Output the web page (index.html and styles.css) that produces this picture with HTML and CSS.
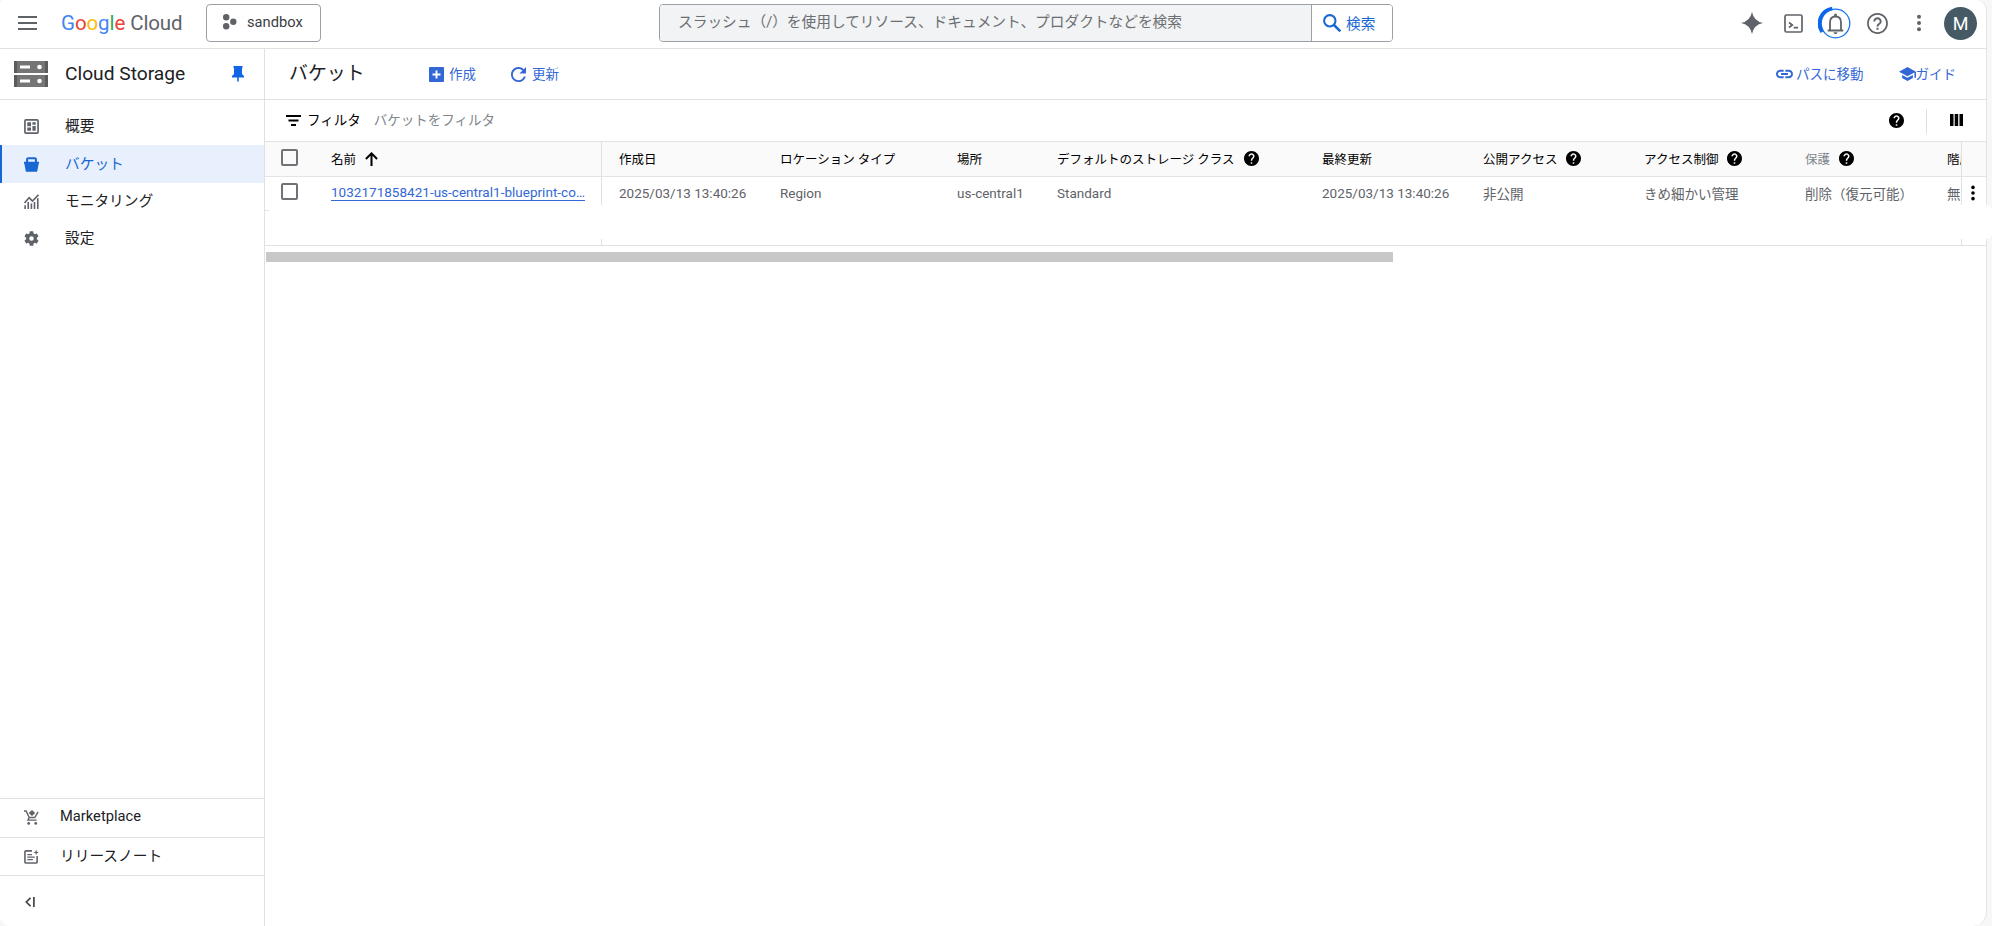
FILE: index.html
```
<!DOCTYPE html>
<html lang="ja">
<head>
  <meta charset="UTF-8">
  <meta name="viewport" content="width=device-width, initial-scale=1.0">
  <title>バケット – Cloud Storage – sandbox – Google Cloud</title>
  <link rel="stylesheet" href="styles.css">
</head>
<body>
  <svg class="defs" width="0" height="0">
    <symbol id="help" viewBox="0 0 24 24">
      <path d="M12 2C6.48 2 2 6.48 2 12s4.48 10 10 10 10-4.48 10-10S17.52 2 12 2zm1 17h-2v-2h2v2zm2.07-7.75l-.9.92C13.45 12.9 13 13.5 13 15h-2v-.5c0-1.1.45-2.1 1.17-2.83l1.24-1.26c.37-.36.59-.86.59-1.41 0-1.1-.9-2-2-2s-2 .9-2 2H8c0-2.21 1.79-4 4-4s4 1.79 4 4c0 .88-.36 1.68-.93 2.25z"/>
    </symbol>
    <symbol id="more" viewBox="0 0 24 24">
      <circle cx="12" cy="4.5" r="2.4"/><circle cx="12" cy="12" r="2.4"/><circle cx="12" cy="19.5" r="2.4"/>
    </symbol>
  </svg>

  <div class="app">
    <header class="topbar">
      <svg class="menu-icon" viewBox="0 0 19 14"><path d="M0 1h19M0 7h19M0 13h19" stroke="#5f6368" stroke-width="2"/></svg>
      <div class="logo"><span class="b">G</span><span class="r">o</span><span class="y">o</span><span class="b">g</span><span class="g">l</span><span class="r">e</span> Cloud</div>
      <button class="project">
        <svg viewBox="0 0 15 16"><circle cx="4.2" cy="3.3" r="3.2"/><circle cx="11.3" cy="7.8" r="3.2"/><circle cx="4.2" cy="12.3" r="3.2"/></svg>
        <span>sandbox</span>
      </button>
      <div class="search">
        <div class="search-input">スラッシュ（/）を使用してリソース、ドキュメント、プロダクトなどを検索</div>
        <button class="search-button">
          <svg viewBox="0 0 18 18"><circle cx="6.8" cy="6.8" r="5.7" fill="none" stroke="#1967d2" stroke-width="2.1"/><path d="M11 11l6.3 6.3" stroke="#1967d2" stroke-width="2.5"/></svg>
          <span>検索</span>
        </button>
      </div>
      <div class="tools">
        <svg class="spark" viewBox="0 0 24 24"><path d="M12 0Q14 10 24 12 14 14 12 24 10 14 0 12 10 10 12 0z"/></svg>
        <svg class="shell" viewBox="0 0 19 19"><rect x="1" y="1" width="17" height="17" rx="1.5" fill="none" stroke="#5f6368" stroke-width="1.7"/><path d="M5 8.500l3.300 2.500L5 13.500M9.700 13.700H14" fill="none" stroke="#5f6368" stroke-width="1.700"/></svg>
        <svg class="bell" viewBox="0 0 34 34">
          <circle cx="17.5" cy="17.5" r="14.3" fill="none" stroke="#1a73e8" stroke-width="1.3"/>
          <path d="M4.2 26A15 15 0 0 1 14.3 2.5" fill="none" stroke="#0b66ea" stroke-width="3.6"/>
          <path d="M9.7 24.5h15.600M12 24.300v-7.800c0-3.600 2.100-6 5.500-6s5.500 2.400 5.500 6v7.800" fill="none" stroke="#5f6368" stroke-width="1.800"/>
          <circle cx="17.5" cy="9" r="1.5" fill="#5f6368"/><path d="M15.5 26.3h4c0 2.400-4 2.400-4 0z" fill="#5f6368"/>
        </svg>
        <svg class="help-outline" viewBox="0 0 24 24"><path d="M11 18h2v-2h-2v2zm1-16C6.480 2 2 6.480 2 12s4.480 10 10 10 10-4.480 10-10S17.520 2 12 2zm0 18.300c-4.560 0-8.300-3.740-8.300-8.300S7.440 3.700 12 3.700s8.300 3.740 8.300 8.300-3.740 8.300-8.300 8.300zm0-14.300c-2.210 0-4 1.790-4 4h1.900c0-1.150.95-2.100 2.100-2.100s2.100.95 2.100 2.100c0 2-3 1.750-3 5h1.900c0-2.250 3-2.500 3-5 0-2.210-1.790-4-4-4z"/></svg>
        <svg class="more" viewBox="0 0 24 24"><use href="#more"/></svg>
        <div class="avatar">M</div>
      </div>
    </header>

    <div class="main">
      <aside class="sidebar">
        <div class="product">
          <svg class="product-icon" viewBox="0 0 34 26">
            <path d="M0 0h34v12H0zM0 14h34v12H0z" fill="#757575"/>
            <path d="M0 0h3v12H0zM31 0h3v12h-3zM0 14h3v12H0zM31 14h3v12h-3z" fill="#5c5c5c"/>
            <path d="M6 4.500h10v3H6zM6 18.500h10v3H6z" fill="#fff"/>
            <circle cx="25.5" cy="6" r="2.3" fill="#fff"/><circle cx="25.5" cy="20" r="2.3" fill="#fff"/>
          </svg>
          <span class="product-name">Cloud Storage</span>
          <svg class="pin" viewBox="0 0 12 16"><path d="M1.500 0h9v2H10v6l2 2v1.500H6.800V15L6 16l-.8-1V11.500H0V10l2-2V2h-.5z" fill="#1266e3"/></svg>
        </div>
        <nav class="nav">
          <a class="nav-item">
            <svg viewBox="0 0 16 16"><rect x="1" y="1" width="14" height="14" rx="1" fill="none" stroke="#5f6368" stroke-width="1.8"/><path d="M3.500 3.500h4v4.200h-4zM3.500 9h4v3.500h-4zM9 3.500h3.500v2.700H9zM9 7.500h3.500v5H9z" fill="#5f6368"/></svg>
            <span>概要</span>
          </a>
          <a class="nav-item active">
            <svg viewBox="0 0 16 16"><path d="M0 5h2.200V2.500Q2.200.2 4.500.2h7q2.300 0 2.300 2.300V5H16v2.300h-.4L14 15.800H2L.4 7.300H0zM4.400 5h7.200V2.500H4.400z" fill="#1967d2" fill-rule="evenodd"/></svg>
            <span>バケット</span>
          </a>
          <a class="nav-item">
            <svg viewBox="0 0 16 16"><path d="M.5 9.500L5.500 4l3.500 3.500L15.500.8" fill="none" stroke="#5f6368" stroke-width="1.7"/><path d="M1.200 16v-4M4.500 16V8.500M7.900 16v-6M11.200 16V8.500M14.700 16V4.500" stroke="#5f6368" stroke-width="1.7"/></svg>
            <span>モニタリング</span>
          </a>
          <a class="nav-item">
            <svg viewBox="2 2 20 20"><path d="M19.140 12.940c.04-.3.060-.61.060-.94 0-.32-.02-.64-.07-.94l2.030-1.580c.18-.14.230-.41.120-.61l-1.920-3.320c-.12-.22-.37-.29-.59-.22l-2.390.96c-.5-.38-1.030-.7-1.620-.94l-.36-2.540c-.04-.24-.24-.41-.48-.41h-3.840c-.24 0-.43.170-.47.410l-.36 2.540c-.59.240-1.130.570-1.620.940l-2.390-.96c-.22-.08-.47 0-.59.220L2.740 8.870c-.12.210-.08.470.120.610l2.030 1.580c-.05.300-.09.630-.09.940s.02.640.070.940l-2.030 1.580c-.18.140-.23.410-.12.610l1.920 3.320c.12.220.37.290.59.220l2.390-.96c.5.380 1.030.7 1.620.940l.36 2.540c.05.240.24.410.48.410h3.840c.24 0 .44-.17.470-.41l.36-2.540c.59-.24 1.130-.56 1.620-.94l2.390.96c.22.080.47 0 .59-.22l1.920-3.320c.12-.22.070-.47-.12-.61l-2.010-1.580zM12 15a3 3 0 1 1 0-6 3 3 0 0 1 0 6z" fill="#5f6368"/></svg>
            <span>設定</span>
          </a>
        </nav>
        <div class="sidebar-bottom">
          <a class="bottom-item">
            <svg viewBox="0 0 16 16"><path d="M0 1h2.300l3.200 7h6L15 2M5.500 8l-1.300 2.800h9.300" fill="none" stroke="#5f6368" stroke-width="1.500"/><path d="M8.500 0l3.500 3.200-3.500 3.200L5 3.200z" fill="#5f6368"/><circle cx="5" cy="14.3" r="1.5" fill="#5f6368"/><circle cx="12.5" cy="14.3" r="1.5" fill="#5f6368"/></svg>
            <span>Marketplace</span>
          </a>
          <a class="bottom-item">
            <svg viewBox="0 0 16 16"><path d="M8.500 2H2.200Q1 2 1 3.200v10.600Q1 15 2.200 15h10.600q1.200 0 1.200-1.200V7.500" fill="none" stroke="#5f6368" stroke-width="1.700"/><path d="M3.500 6h5M3.500 8.700h8M3.500 11.400h6" stroke="#5f6368" stroke-width="1.400"/><path d="M13 .8l.8 2 2 .8-2 .8-.8 2-.8-2-2-.8 2-.8z" fill="#5f6368"/></svg>
            <span>リリースノート</span>
          </a>
          <div class="collapse">
            <svg viewBox="0 0 10 10"><path d="M5.500.8L1.300 5l4.200 4.200M8.900 0v10" fill="none" stroke="#444746" stroke-width="1.7"/></svg>
          </div>
        </div>
      </aside>

      <section class="content">
        <div class="page-header">
          <h1>バケット</h1>
          <a class="action create">
            <svg viewBox="0 0 15 15"><rect width="15" height="15" rx="1" fill="#3367d6"/><path d="M7.500 3.500v8M3.500 7.500h8" stroke="#fff" stroke-width="1.900"/></svg>
            <span>作成</span>
          </a>
          <a class="action refresh">
            <svg viewBox="4 4 16 16"><path d="M17.650 6.350C16.200 4.900 14.210 4 12 4c-4.420 0-7.990 3.580-7.990 8s3.570 8 7.990 8c3.730 0 6.840-2.550 7.730-6h-2.080c-.82 2.330-3.040 4-5.650 4-3.310 0-6-2.690-6-6s2.690-6 6-6c1.660 0 3.140.69 4.220 1.780L13 11h7V4l-2.350 2.350z" fill="#3367d6"/></svg>
            <span>更新</span>
          </a>
          <div class="page-links">
            <a class="action path">
              <svg viewBox="2 7 20 10"><path d="M4.300 12c0-1.500 1.200-2.700 2.700-2.700h4V7H7c-2.760 0-5 2.240-5 5s2.240 5 5 5h4v-2.300H7c-1.500 0-2.700-1.200-2.700-2.700zM8 13.100h8v-2.200H8v2.200zM17 7h-4v2.300h4c1.500 0 2.700 1.200 2.700 2.700s-1.200 2.700-2.700 2.700h-4V17h4c2.760 0 5-2.240 5-5s-2.240-5-5-5z" fill="#3367d6"/></svg>
              <span>パスに移動</span>
            </a>
            <a class="action guide">
              <svg viewBox="1 3 22 18"><path d="M5 13.180v4L12 21l7-3.820v-4L12 17l-7-3.820zM12 3L1 9l11 6 9-4.910V17h2V9L12 3z" fill="#3367d6"/></svg>
              <span>ガイド</span>
            </a>
          </div>
        </div>

        <div class="filter-bar">
          <svg class="filter-icon" viewBox="0 0 15 11"><path d="M0 1h15M2.500 5.500h10M5 10h5" stroke="#000" stroke-width="1.900"/></svg>
          <span class="filter-label">フィルタ</span>
          <span class="filter-hint">バケットをフィルタ</span>
          <svg class="help filter-help" viewBox="2 2 20 20"><use href="#help" width="24" height="24"/></svg>
          <i class="divider"></i>
          <svg class="columns" viewBox="0 0 13 12"><path d="M0 0h3.500v12H0zM4.700 0h3.500v12H4.700zM9.500 0H13v12H9.500z"/></svg>
        </div>

        <div class="table">
          <div class="row head">
            <div class="cell check"><i class="checkbox"></i></div>
            <div class="cell name">名前 <svg class="arrow" viewBox="0 0 12 13"><path d="M6 13V1.500M.8 6.500L6 1.300l5.200 5.200" fill="none" stroke="#000" stroke-width="1.900"/></svg></div>
            <div class="cell created">作成日</div>
            <div class="cell type">ロケーション タイプ</div>
            <div class="cell place">場所</div>
            <div class="cell class">デフォルトのストレージ クラス <svg class="help" viewBox="2 2 20 20"><use href="#help" width="24" height="24"/></svg></div>
            <div class="cell updated">最終更新</div>
            <div class="cell public">公開アクセス <svg class="help" viewBox="2 2 20 20"><use href="#help" width="24" height="24"/></svg></div>
            <div class="cell access">アクセス制御 <svg class="help" viewBox="2 2 20 20"><use href="#help" width="24" height="24"/></svg></div>
            <div class="cell protect"><span class="muted">保護</span> <svg class="help" viewBox="2 2 20 20"><use href="#help" width="24" height="24"/></svg></div>
            <div class="cell hier">階層</div>
            <div class="cell menu"></div>
          </div>
          <div class="row">
            <div class="cell check"><i class="checkbox"></i></div>
            <div class="cell name"><a>1032171858421-us-central1-blueprint-co…</a></div>
            <div class="cell created">2025/03/13 13:40:26</div>
            <div class="cell type">Region</div>
            <div class="cell place">us-central1</div>
            <div class="cell class">Standard</div>
            <div class="cell updated">2025/03/13 13:40:26</div>
            <div class="cell public">非公開</div>
            <div class="cell access">きめ細かい管理</div>
            <div class="cell protect">削除（復元可能）</div>
            <div class="cell hier">無</div>
            <div class="cell menu"><svg viewBox="0 0 24 24"><use href="#more"/></svg></div>
          </div>
          <div class="row filler">
            <div class="cell check"></div>
            <div class="cell name"></div>
            <div class="cell rest"></div>
            <div class="cell menu"></div>
          </div>
          <div class="row-cover"></div>
        </div>
        <div class="scrollbar"></div>
      </section>
    </div>
  </div>
</body>
</html>
```

FILE: styles.css
```
* {
  margin: 0;
  padding: 0;
  box-sizing: border-box;
}
body {
  height: 926px;
  overflow: hidden;
  background: #f7f7f7;
  font-family: Roboto, "Noto Sans CJK JP", sans-serif;
  font-size: 13.5px;
  color: #202124;
}
svg {
  display: block;
  flex: none;
}
button {
  font: inherit;
  background: #fff;
}
.defs {
  position: absolute;
}
.app {
  width: 1987px;
  height: 926px;
  display: flex;
  flex-direction: column;
  background: #fff;
  border-right: 1px solid #e4e4e4;
  border-radius: 4px 10px 14px 10px;
}

/* top bar */
.topbar {
  height: 49px;
  flex: none;
  display: flex;
  align-items: flex-start;
  border-bottom: 1px solid #dfe1e5;
}
.menu-icon {
  width: 19px;
  height: 14px;
  margin: 16px 0 0 18px;
}
.logo {
  width: 145px;
  margin: 9px 0 0 24px;
  font-size: 20.5px;
  line-height: 28px;
  letter-spacing: -0.1px;
  color: #5f6368;
  white-space: nowrap;
}
.logo .b { color: #4285f4; }
.logo .r { color: #ea4335; }
.logo .y { color: #fbbc04; }
.logo .g { color: #34a853; }
.project {
  width: 115px;
  height: 38px;
  margin-top: 4px;
  padding: 0 0 2px 15px;
  display: flex;
  align-items: center;
  gap: 10px;
  border: 1px solid #9aa0a6;
  border-radius: 4px;
  font-size: 14.7px;
  color: #3c4043;
}
.project svg {
  width: 15px;
  height: 16px;
  fill: #5f6368;
}
.search {
  width: 734px;
  height: 38px;
  margin: 4px 0 0 338px;
  display: flex;
  border: 1px solid #9aa0a6;
  border-radius: 4px;
  overflow: hidden;
}
.search-input {
  width: 651px;
  padding-left: 18px;
  background: #f1f3f4;
  font-size: 14.7px;
  line-height: 34px;
  color: #6b6f73;
  white-space: nowrap;
}
.search-button {
  flex: 1;
  padding-left: 11px;
  display: flex;
  align-items: center;
  gap: 5px;
  border: 0;
  border-left: 1px solid #9aa0a6;
  font-size: 14.7px;
  color: #1967d2;
}
.search-button svg {
  width: 18px;
  height: 18px;
}
.search-button span {
  padding-bottom: 2px;
}
.tools {
  height: 46px;
  margin-left: auto;
  padding-right: 9px;
  display: flex;
  align-items: center;
  fill: #5f6368;
}
.spark {
  width: 22px;
  height: 22px;
  margin-right: 21px;
}
.shell {
  width: 19px;
  height: 19px;
  margin-right: 15px;
}
.bell {
  width: 34px;
  height: 34px;
  margin-right: 13px;
}
.help-outline {
  width: 25px;
  height: 25px;
  margin-right: 19px;
}
.more {
  width: 20px;
  height: 20px;
  margin-right: 15px;
}
.avatar {
  width: 33px;
  height: 33px;
  border-radius: 50%;
  background: #455a64;
  color: #fff;
  font-size: 18px;
  line-height: 34px;
  text-align: center;
}

/* sidebar */
.main {
  flex: 1;
  display: flex;
  min-height: 0;
}
.sidebar {
  width: 265px;
  flex: none;
  display: flex;
  flex-direction: column;
  border-right: 1px solid #dfe1e5;
}
.product {
  height: 51px;
  padding: 0 20px 0 14px;
  display: flex;
  align-items: center;
  border-bottom: 1px solid #dfe1e5;
}
.product-icon {
  width: 34px;
  height: 26px;
}
.product-name {
  margin-left: 17px;
  font-size: 19.2px;
  line-height: 28px;
  white-space: nowrap;
}
.pin {
  width: 12px;
  height: 16px;
  margin-left: auto;
}
.nav {
  padding-top: 8px;
}
.nav-item {
  height: 37.4px;
  padding-left: 24px;
  display: flex;
  align-items: center;
  gap: 26px;
  font-size: 14.7px;
}
.nav-item svg {
  width: 15px;
  height: 15px;
}
.nav-item span {
  padding-bottom: 4px;
}
.nav-item.active {
  padding-left: 22px;
  border-left: 2px solid #1967d2;
  background: #e8f0fe;
  color: #1967d2;
}
.sidebar-bottom {
  margin-top: auto;
}
.bottom-item {
  height: 38.5px;
  padding-left: 24px;
  display: flex;
  align-items: center;
  gap: 21px;
  border-top: 1px solid #dfe1e5;
  font-size: 14.7px;
}
.bottom-item svg {
  width: 15px;
  height: 15px;
}
.bottom-item span {
  padding-bottom: 3px;
}
.collapse {
  height: 51px;
  padding: 21px 0 0 25px;
  border-top: 1px solid #dfe1e5;
}
.collapse svg {
  width: 10px;
  height: 10px;
}

/* page header */
.content {
  flex: 1;
  min-width: 0;
}
.page-header {
  height: 51px;
  padding: 0 30px 0 24px;
  display: flex;
  align-items: center;
  border-bottom: 1px solid #dfe1e5;
}
.page-header h1 {
  width: 140px;
  padding-bottom: 1px;
  font-size: 18.9px;
  font-weight: 400;
  line-height: 28px;
}
.action {
  display: flex;
  align-items: center;
  color: #3367d6;
  white-space: nowrap;
}
.action span {
  padding-bottom: 3px;
}
.create {
  width: 82px;
  gap: 5px;
}
.refresh {
  gap: 6px;
}
.create svg,
.refresh svg {
  width: 15px;
  height: 15px;
}
.page-links {
  margin-left: auto;
  display: flex;
  gap: 35px;
}
.path {
  gap: 3px;
}
.path svg {
  width: 17px;
  height: 10px;
}
.guide svg {
  width: 17px;
  height: 14px;
}

/* filter */
.filter-bar {
  height: 41px;
  padding: 0 23px 1px 21px;
  display: flex;
  align-items: center;
}
.filter-icon {
  width: 15px;
  height: 11px;
  margin-right: 6px;
}
.filter-label {
  padding-bottom: 2px;
  color: #000;
}
.filter-hint {
  margin-left: 13px;
  padding-bottom: 2px;
  color: #80868b;
}
.help {
  width: 15px;
  height: 15px;
  fill: #000;
}
.filter-help {
  margin-left: auto;
}
.divider {
  width: 1px;
  height: 25px;
  margin: 2px 23px 0 22px;
  background: #dfe1e5;
}
.columns {
  width: 13px;
  height: 12px;
}

/* table */
.table {
  position: relative;
  border-top: 1px solid #dfe1e5;
  border-bottom: 1px solid #dfe1e5;
}
.row {
  height: 34px;
  display: flex;
  border-bottom: 1px solid #e2e4e6;
  color: #5f6368;
}
.row.head {
  height: 35px;
  background: #fafafa;
  font-size: 12.5px;
  color: #000;
}
.row.filler {
  border-bottom: 0;
}
.cell {
  flex: none;
  padding-bottom: 2px;
  display: flex;
  align-items: center;
  white-space: nowrap;
  overflow: hidden;
}
.head .help {
  margin: 1px 0 0 9px;
}
.check {
  width: 66px;
  padding: 0 0 4px 16px;
}
.checkbox {
  width: 17px;
  height: 17px;
  border: 2px solid #6f7377;
  border-radius: 2px;
}
.name {
  width: 271px;
  border-right: 1px solid #dfe1e5;
}
.name a {
  color: #3367d6;
  line-height: 16px;
  letter-spacing: 0.02px;
  border-bottom: 1px solid #3367d6;
}
.arrow {
  width: 13px;
  height: 14px;
  margin: 1px 0 0 9px;
}
.created {
  width: 178px;
  padding-left: 17px;
}
.type { width: 177px; }
.place { width: 100px; }
.class { width: 265px; }
.updated { width: 161px; }
.public { width: 161px; }
.access { width: 161px; }
.protect { width: 142px; }
.hier { width: 14px; }
.rest { flex: 1; }
.muted {
  color: #80868b;
}
.menu {
  flex: 1;
  border-left: 1px solid #dfe1e5;
}
.filler .menu {
  flex: none;
  width: 25px;
}
.menu svg {
  width: 18px;
  height: 18px;
  margin-left: 2px;
  fill: #000;
}
/* blank strip across the end of the row */
.row-cover {
  position: absolute;
  left: 4px;
  top: 63px;
  width: 1723px;
  height: 34px;
  border-radius: 6px;
  background: #fff;
}
.scrollbar {
  width: 1127px;
  height: 10px;
  margin: 6px 0 0 1px;
  background: #c8c8c8;
}
```
